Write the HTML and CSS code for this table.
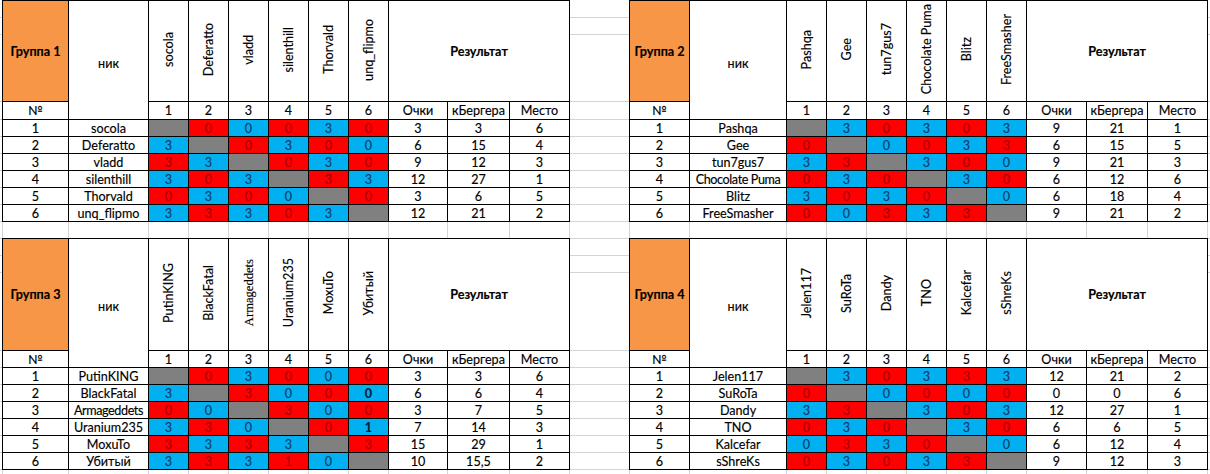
FILE: index.html
```html
<!DOCTYPE html>
<html lang="ru">
<head>
<meta charset="utf-8">
<title>Группы</title>
<link rel="stylesheet" href="styles.css">
</head>
<body>
<div class="sheet">
  <div class="band band-top">
    <div class="side edge"><div class="gc h18"></div><div class="gc h17"></div><div class="gc h67"></div><div class="gc h18"></div><div class="gc h17"></div><div class="gc h17"></div><div class="gc h17"></div><div class="gc h17"></div><div class="gc h17"></div><div class="gc h17"></div></div>
    <table class="grp grp-l">
      <colgroup><col class="w66"><col class="w80"><col class="w40"><col class="w40"><col class="w40"><col class="w40"><col class="w40"><col class="w40"><col class="w59"><col class="w62"><col class="w60"></colgroup>
      <tr class="hdr hdr-a">
        <th class="gname">Группа 1</th>
        <th class="nick-h" rowspan="2">ник</th>
        <th class="vert"><span>socola</span></th>
        <th class="vert"><span>Deferatto</span></th>
        <th class="vert"><span>vladd</span></th>
        <th class="vert"><span>silenthill</span></th>
        <th class="vert"><span>Thorvald</span></th>
        <th class="vert"><span>unq_flipmo</span></th>
        <th class="res" colspan="3">Результат</th>
      </tr>
      <tr class="sub sub-a"><td>№</td><td>1</td><td>2</td><td>3</td><td>4</td><td>5</td><td>6</td><td>Очки</td><td>кБергера</td><td>Место</td></tr>
      <tr><td>1</td><td>socola</td><td class="x"></td><td class="r">0</td><td class="b">0</td><td class="r">0</td><td class="b">3</td><td class="r">0</td><td>3</td><td>3</td><td>6</td></tr>
      <tr><td>2</td><td>Deferatto</td><td class="b">3</td><td class="x"></td><td class="r">0</td><td class="b">3</td><td class="r">0</td><td class="b">0</td><td>6</td><td>15</td><td>4</td></tr>
      <tr><td>3</td><td>vladd</td><td class="r">3</td><td class="b">3</td><td class="x"></td><td class="r">0</td><td class="b">3</td><td class="r">0</td><td>9</td><td>12</td><td>3</td></tr>
      <tr><td>4</td><td>silenthill</td><td class="b">3</td><td class="r">0</td><td class="b">3</td><td class="x"></td><td class="r">3</td><td class="b">3</td><td>12</td><td>27</td><td>1</td></tr>
      <tr><td>5</td><td>Thorvald</td><td class="r">0</td><td class="b">3</td><td class="r">0</td><td class="b">0</td><td class="x"></td><td class="r">0</td><td>3</td><td>6</td><td>5</td></tr>
      <tr><td>6</td><td>unq_flipmo</td><td class="b">3</td><td class="r">3</td><td class="b">3</td><td class="r">0</td><td class="b">3</td><td class="x"></td><td>12</td><td>21</td><td>2</td></tr>
    </table>
    <div class="side gap"><div class="gc h18"></div><div class="gc h17"></div><div class="gc h67"></div><div class="gc h18"></div><div class="gc h17"></div><div class="gc h17"></div><div class="gc h17"></div><div class="gc h17"></div><div class="gc h17"></div><div class="gc h17"></div></div>
    <table class="grp grp-r">
      <colgroup><col class="w60"><col class="w97"><col class="w40"><col class="w40"><col class="w40"><col class="w40"><col class="w40"><col class="w40"><col class="w60"><col class="w61"><col class="w60"></colgroup>
      <tr class="hdr hdr-a">
        <th class="gname">Группа 2</th>
        <th class="nick-h" rowspan="2">ник</th>
        <th class="vert"><span>Pashqa</span></th>
        <th class="vert"><span>Gee</span></th>
        <th class="vert"><span>tun7gus7</span></th>
        <th class="vert"><span>Chocolate Puma</span></th>
        <th class="vert"><span>Blitz</span></th>
        <th class="vert"><span>FreeSmasher</span></th>
        <th class="res" colspan="3">Результат</th>
      </tr>
      <tr class="sub sub-a"><td>№</td><td>1</td><td>2</td><td>3</td><td>4</td><td>5</td><td>6</td><td>Очки</td><td>кБергера</td><td>Место</td></tr>
      <tr><td>1</td><td>Pashqa</td><td class="x"></td><td class="b">3</td><td class="r">0</td><td class="b">3</td><td class="r">0</td><td class="b">3</td><td>9</td><td>21</td><td>1</td></tr>
      <tr><td>2</td><td>Gee</td><td class="r">0</td><td class="x"></td><td class="b">0</td><td class="r">0</td><td class="b">3</td><td class="r">3</td><td>6</td><td>15</td><td>5</td></tr>
      <tr><td>3</td><td>tun7gus7</td><td class="b">3</td><td class="r">3</td><td class="x"></td><td class="b">3</td><td class="r">0</td><td class="b">0</td><td>9</td><td>21</td><td>3</td></tr>
      <tr><td>4</td><td class="tight">Chocolate Puma</td><td class="r">0</td><td class="b">3</td><td class="r">0</td><td class="x"></td><td class="b">3</td><td class="r">0</td><td>6</td><td>12</td><td>6</td></tr>
      <tr><td>5</td><td>Blitz</td><td class="b">3</td><td class="r">0</td><td class="b">3</td><td class="r">0</td><td class="x"></td><td class="b">0</td><td>6</td><td>18</td><td>4</td></tr>
      <tr><td>6</td><td>FreeSmasher</td><td class="r">0</td><td class="b">0</td><td class="r">3</td><td class="b">3</td><td class="r">3</td><td class="x"></td><td>9</td><td>21</td><td>2</td></tr>
    </table>
    <div class="side edge"><div class="gc h18"></div><div class="gc h17"></div><div class="gc h67"></div><div class="gc h18"></div><div class="gc h17"></div><div class="gc h17"></div><div class="gc h17"></div><div class="gc h17"></div><div class="gc h17"></div><div class="gc h17"></div></div>
  </div>

  <div class="blank blank-a">
    <div class="bc w3"></div><div class="bc w66"></div><div class="bc w80"></div><div class="bc w40"></div><div class="bc w40"></div><div class="bc w40"></div><div class="bc w40"></div><div class="bc w40"></div><div class="bc w40"></div><div class="bc w59"></div><div class="bc w62"></div><div class="bc w60"></div><div class="bc w60"></div><div class="bc w60"></div><div class="bc w97"></div><div class="bc w40"></div><div class="bc w40"></div><div class="bc w40"></div><div class="bc w40"></div><div class="bc w40"></div><div class="bc w40"></div><div class="bc w60"></div><div class="bc w61"></div><div class="bc w60"></div>
  </div>

  <div class="band band-bottom">
    <div class="side edge"><div class="gc h17"></div><div class="gc h17"></div><div class="gc h78"></div><div class="gc h17"></div><div class="gc h17"></div><div class="gc h17"></div><div class="gc h17"></div><div class="gc h17"></div><div class="gc h17"></div><div class="gc h17"></div></div>
    <table class="grp grp-l">
      <colgroup><col class="w66"><col class="w80"><col class="w40"><col class="w40"><col class="w40"><col class="w40"><col class="w40"><col class="w40"><col class="w59"><col class="w62"><col class="w60"></colgroup>
      <tr class="hdr hdr-b">
        <th class="gname">Группа 3</th>
        <th class="nick-h" rowspan="2">ник</th>
        <th class="vert"><span>PutinKING</span></th>
        <th class="vert"><span>BlackFatal</span></th>
        <th class="vert"><span class="serif">Armageddets</span></th>
        <th class="vert"><span>Uranium235</span></th>
        <th class="vert"><span>MoxuTo</span></th>
        <th class="vert"><span>Убитый</span></th>
        <th class="res" colspan="3">Результат</th>
      </tr>
      <tr class="sub sub-b"><td>№</td><td>1</td><td>2</td><td>3</td><td>4</td><td>5</td><td>6</td><td>Очки</td><td>кБергера</td><td>Место</td></tr>
      <tr><td>1</td><td>PutinKING</td><td class="x"></td><td class="r">0</td><td class="b">3</td><td class="r">0</td><td class="b">0</td><td class="r">0</td><td>3</td><td>3</td><td>6</td></tr>
      <tr><td>2</td><td>BlackFatal</td><td class="b">3</td><td class="x"></td><td class="r">3</td><td class="b">0</td><td class="r">0</td><td class="b strong">0</td><td>6</td><td>6</td><td>4</td></tr>
      <tr><td>3</td><td class="tight">Armageddets</td><td class="r">0</td><td class="b">0</td><td class="x"></td><td class="r">3</td><td class="b">0</td><td class="r">0</td><td>3</td><td>7</td><td>5</td></tr>
      <tr><td>4</td><td>Uranium235</td><td class="b">3</td><td class="r">3</td><td class="b">0</td><td class="x"></td><td class="r">0</td><td class="b strong">1</td><td>7</td><td>14</td><td>3</td></tr>
      <tr><td>5</td><td>MoxuTo</td><td class="r">3</td><td class="b">3</td><td class="r">3</td><td class="b">3</td><td class="x"></td><td class="r">3</td><td>15</td><td>29</td><td>1</td></tr>
      <tr><td>6</td><td>Убитый</td><td class="b">3</td><td class="r">3</td><td class="b">3</td><td class="r">1</td><td class="b">0</td><td class="x"></td><td>10</td><td>15,5</td><td>2</td></tr>
    </table>
    <div class="side gap"><div class="gc h17"></div><div class="gc h17"></div><div class="gc h78"></div><div class="gc h17"></div><div class="gc h17"></div><div class="gc h17"></div><div class="gc h17"></div><div class="gc h17"></div><div class="gc h17"></div><div class="gc h17"></div></div>
    <table class="grp grp-r">
      <colgroup><col class="w60"><col class="w97"><col class="w40"><col class="w40"><col class="w40"><col class="w40"><col class="w40"><col class="w40"><col class="w60"><col class="w61"><col class="w60"></colgroup>
      <tr class="hdr hdr-b">
        <th class="gname">Группа 4</th>
        <th class="nick-h" rowspan="2">ник</th>
        <th class="vert"><span>Jelen117</span></th>
        <th class="vert"><span>SuRoTa</span></th>
        <th class="vert"><span>Dandy</span></th>
        <th class="vert"><span>TNO</span></th>
        <th class="vert"><span>Kalcefar</span></th>
        <th class="vert"><span>sShreKs</span></th>
        <th class="res" colspan="3">Результат</th>
      </tr>
      <tr class="sub sub-b"><td>№</td><td>1</td><td>2</td><td>3</td><td>4</td><td>5</td><td>6</td><td>Очки</td><td>кБергера</td><td>Место</td></tr>
      <tr><td>1</td><td>Jelen117</td><td class="x"></td><td class="b">3</td><td class="r">0</td><td class="b">3</td><td class="r">3</td><td class="b">3</td><td>12</td><td>21</td><td>2</td></tr>
      <tr><td>2</td><td>SuRoTa</td><td class="r">0</td><td class="x"></td><td class="b">0</td><td class="r">0</td><td class="b">0</td><td class="r">0</td><td>0</td><td>0</td><td>6</td></tr>
      <tr><td>3</td><td>Dandy</td><td class="b">3</td><td class="r">3</td><td class="x"></td><td class="b">3</td><td class="r">0</td><td class="b">3</td><td>12</td><td>27</td><td>1</td></tr>
      <tr><td>4</td><td>TNO</td><td class="r">0</td><td class="b">3</td><td class="r">0</td><td class="x"></td><td class="b">3</td><td class="r">0</td><td>6</td><td>6</td><td>5</td></tr>
      <tr><td>5</td><td>Kalcefar</td><td class="b">0</td><td class="r">3</td><td class="b">3</td><td class="r">0</td><td class="x"></td><td class="b">0</td><td>6</td><td>12</td><td>4</td></tr>
      <tr><td>6</td><td>sShreKs</td><td class="r">0</td><td class="b">3</td><td class="r">0</td><td class="b">3</td><td class="r">3</td><td class="x"></td><td>9</td><td>12</td><td>3</td></tr>
    </table>
    <div class="side edge"><div class="gc h17"></div><div class="gc h17"></div><div class="gc h78"></div><div class="gc h17"></div><div class="gc h17"></div><div class="gc h17"></div><div class="gc h17"></div><div class="gc h17"></div><div class="gc h17"></div><div class="gc h17"></div></div>
  </div>

  <div class="blank blank-b">
    <div class="bc w3"></div><div class="bc w66"></div><div class="bc w80"></div><div class="bc w40"></div><div class="bc w40"></div><div class="bc w40"></div><div class="bc w40"></div><div class="bc w40"></div><div class="bc w40"></div><div class="bc w59"></div><div class="bc w62"></div><div class="bc w60"></div><div class="bc w60"></div><div class="bc w60"></div><div class="bc w97"></div><div class="bc w40"></div><div class="bc w40"></div><div class="bc w40"></div><div class="bc w40"></div><div class="bc w40"></div><div class="bc w40"></div><div class="bc w60"></div><div class="bc w61"></div><div class="bc w60"></div>
  </div>
</div>
</body>
</html>
```

FILE: styles.css
```css
* { box-sizing: border-box; }

html, body {
  margin: 0;
  padding: 0;
  background: #ffffff;
}

body {
  font-family: "Lato", "Liberation Sans", sans-serif;
  font-size: 12.6px;
  line-height: 15px;
  color: #000000;
  -webkit-text-stroke: 0.15px currentColor;
}

.sheet {
  width: 1210px;
  overflow: hidden;
}

.band {
  display: flex;
  align-items: flex-start;
}

/* gridline columns between / beside the tables */
.side {
  flex: none;
  display: flex;
  flex-direction: column;
}
.edge { width: 2px; }
.gap { width: 59px; }
.band-bottom .side { border-top: 1px solid #d4d4d4; }

.gc { border-bottom: 1px solid #d4d4d4; }
.h17 { height: 17px; }
.h18 { height: 18px; }
.h67 { height: 67px; }
.h78 { height: 78px; }

/* blank spreadsheet rows */
.blank {
  display: flex;
}
.blank-a { height: 16px; }
.blank-b { height: 17px; }
.bc {
  flex: none;
  border-right: 1px solid #d4d4d4;
}

/* column widths (shared by cols and blank cells) */
.w3 { width: 3px; }
.w40 { width: 40px; }
.w59 { width: 59px; }
.w60 { width: 60px; }
.w61 { width: 61px; }
.w62 { width: 62px; }
.w66 { width: 66px; }
.w80 { width: 80px; }
.w97 { width: 97px; }

/* group tables */
.grp {
  flex: none;
  table-layout: fixed;
  border-collapse: separate;
  border-spacing: 0;
  border-left: 1px solid #000;
  border-top: 1px solid #000;
}
.grp-l { width: 568px; }
.grp-r { width: 579px; }

.grp th,
.grp td {
  padding: 0;
  border-right: 1px solid #000;
  border-bottom: 1px solid #000;
  text-align: center;
  vertical-align: middle;
  white-space: nowrap;
  overflow: hidden;
  font-weight: normal;
  height: 17px;
}

.hdr-a th { height: 101px; }
.hdr-b th { height: 112px; }
.sub-a td { height: 18px; }
.sub-b td { height: 17px; }

.gname {
  background: #f79646;
  font-weight: bold !important;
}
.res { font-weight: bold !important; }
.nick-h { padding-top: 6px !important; }

.grp td.tight { letter-spacing: -0.4px; }

.vert span {
  display: inline-block;
  writing-mode: vertical-rl;
  transform: rotate(180deg);
  line-height: 16px;
}
.vert .serif {
  font-family: "Liberation Serif", serif;
}

/* score cells */
.grp td.x { background: #808080; }
.grp td.r { background: #ff0000; color: #a80000; }
.grp td.b { background: #00b0f0; color: #173a66; }
.grp td.strong { color: #0a1a33; font-weight: bold; }
```
